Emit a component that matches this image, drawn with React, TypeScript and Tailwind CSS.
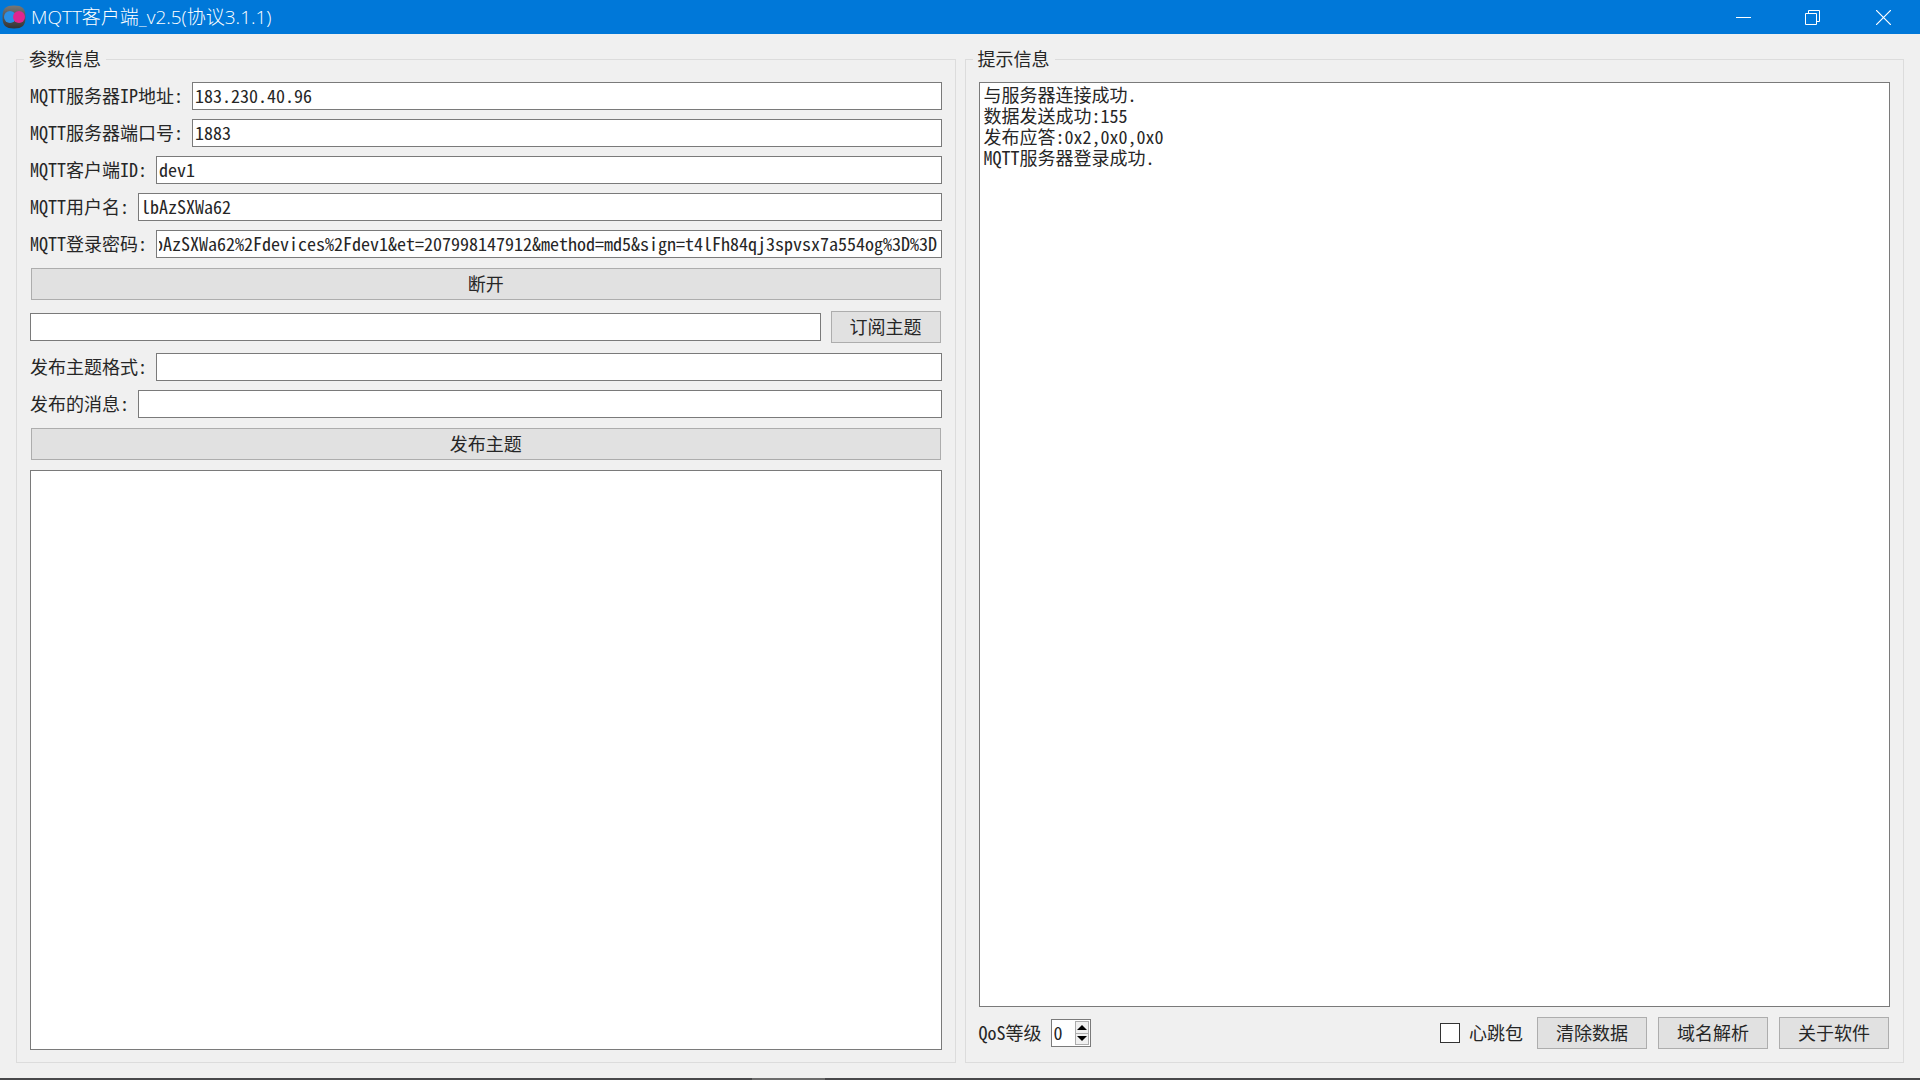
import React, { useEffect, useRef, useState } from "react";

const songFont = "font-['Noto_Sans_Mono_CJK_SC','Noto_Sans_CJK_SC',monospace]";

const password =
  "bAzSXWa62%2Fdevices%2Fdev1&et=207998147912&method=md5&sign=t4lFh84qj3spvsx7a554og%3D%3D";

const logText = `与服务器连接成功.
数据发送成功:155
发布应答:0x2,0x0,0x0
MQTT服务器登录成功.`;

const inputClass =
  "h-7 min-w-0 flex-1 border border-[#7a7a7a] bg-white pr-1 pb-0.5 pl-0.5 outline-none";

function Button({ children, wide }: { children: React.ReactNode; wide?: boolean }) {
  return (
    <button
      type="button"
      className={`m-px h-8 border border-[#adadad] bg-[#e1e1e1] pb-0.5 hover:bg-[#e5f1fb] ${
        wide ? "" : "w-[110px] shrink-0"
      }`}
    >
      {children}
    </button>
  );
}

function Field({ id, label, value = "" }: { id: string; label: string; value?: string }) {
  const ref = useRef<HTMLInputElement>(null);

  // keep the end of long values in view
  useEffect(() => {
    if (ref.current) ref.current.scrollLeft = ref.current.scrollWidth;
  }, []);

  return (
    <div className="flex items-center gap-[9px]">
      <label htmlFor={id} className="pb-0.5 leading-6 whitespace-nowrap">
        {label}
      </label>
      <input ref={ref} id={id} type="text" defaultValue={value} className={inputClass} />
    </div>
  );
}

function Group({ title, children }: { title: string; children: React.ReactNode }) {
  return (
    <fieldset className="flex min-w-0 flex-1 flex-col gap-[9px] border border-[#dcdcdc] px-[13px] pt-[13px] pb-3">
      <legend className="-ml-1.5 px-[5px] pb-0.5 leading-[17px]">{title}</legend>
      {children}
    </fieldset>
  );
}

function Logo() {
  return (
    <svg width="24" height="24" viewBox="0 0 24 24" aria-hidden="true">
      <defs>
        <linearGradient id="logoBg" x1="0" y1="0" x2="0" y2="1">
          <stop offset="0" stopColor="#777" />
          <stop offset="1" stopColor="#333" />
        </linearGradient>
      </defs>
      <path
        d="M12 .5C20.500 .5 23.500 3.500 23.500 12S20.500 23.500 12 23.500 .5 20.500 .5 12 3.500 .5 12 .5Z"
        fill="url(#logoBg)"
      />
      <circle cx="8" cy="12" r="6" fill="#2a8fe6" />
      <circle cx="17" cy="12" r="6" fill="#e0258f" />
    </svg>
  );
}

function TitleBar() {
  return (
    <header className="flex h-[34px] items-center bg-[#0078d9] pl-0.5 text-white">
      <Logo />
      <h1 className="ml-[5px] flex-1 pt-0.5 font-['Open_Sans','Noto_Sans_CJK_SC',sans-serif] text-[19px] font-light">
        MQTT客户端_v2.5(协议3.1.1)
      </h1>
      <button type="button" aria-label="最小化" className="flex h-full w-[69px] items-center justify-center">
        <svg width="15" height="15" viewBox="0 0 15 15" stroke="currentColor">
          <path d="M0 7.500H15" />
        </svg>
      </button>
      <button type="button" aria-label="还原" className="flex h-full w-[69px] items-center justify-center">
        <svg width="15" height="15" viewBox="0 0 15 15" fill="none" stroke="currentColor">
          <path d="M.5 3.500H11.500V14.500H.5ZM3.500 3.500V.5H14.500V11.500H11.500" />
        </svg>
      </button>
      <button type="button" aria-label="关闭" className="flex h-full w-[73px] items-center justify-center">
        <svg width="15" height="15" viewBox="0 0 15 15" stroke="currentColor" strokeWidth="1.2">
          <path d="M0 0L15 15M15 0L0 15" />
        </svg>
      </button>
    </header>
  );
}

function QosSpin() {
  const [qos, setQos] = useState(0);

  return (
    <div className="flex items-center gap-[9px]">
      <label htmlFor="qos" className="pb-0.5 leading-6">
        QoS等级
      </label>
      <div className="flex h-7 w-10 border border-[#7a7a7a] bg-white p-px">
        <input
          id="qos"
          type="text"
          value={qos}
          onChange={(e) => setQos(Number(e.target.value) || 0)}
          className="min-w-0 flex-1 pb-0.5 pl-px outline-none"
        />
        <div className="flex w-3.5 shrink-0 flex-col border border-[#adadad] bg-[#f0f0f0]">
          <button
            type="button"
            aria-label="增加"
            onClick={() => setQos(Math.min(2, qos + 1))}
            className="flex flex-1 items-center justify-center border-b border-[#adadad]"
          >
            <svg width="10" height="5" viewBox="0 0 10 5">
              <path d="M5 0L10 5H0Z" fill="#000" />
            </svg>
          </button>
          <button
            type="button"
            aria-label="减少"
            onClick={() => setQos(Math.max(0, qos - 1))}
            className="flex flex-1 items-center justify-center"
          >
            <svg width="10" height="5" viewBox="0 0 10 5">
              <path d="M0 0H10L5 5Z" fill="#000" />
            </svg>
          </button>
        </div>
      </div>
    </div>
  );
}

export default function App() {
  return (
    <div className={`flex min-h-screen flex-col bg-[#f0f0f0] text-lg font-light text-neutral-800 ${songFont}`}>
      <TitleBar />

      <main className="flex flex-1 gap-[9px] px-4 pt-4 pb-[15px]">
        {/* 左侧:连接参数 */}
        <Group title="参数信息">
          <Field id="ip" label="MQTT服务器IP地址:" value="183.230.40.96" />
          <Field id="port" label="MQTT服务器端口号:" value="1883" />
          <Field id="client" label="MQTT客户端ID:" value="dev1" />
          <Field id="user" label="MQTT用户名:" value="lbAzSXWa62" />
          <Field id="password" label="MQTT登录密码:" value={password} />
          <Button wide>断开</Button>
          <div className="flex items-center gap-[9px]">
            <input type="text" aria-label="订阅主题" className={inputClass} />
            <Button>订阅主题</Button>
          </div>
          <Field id="topic" label="发布主题格式:" />
          <Field id="message" label="发布的消息:" />
          <Button wide>发布主题</Button>
          <textarea
            aria-label="接收的消息"
            className="flex-1 resize-none border border-[#7a7a7a] bg-white p-1 leading-[21px] outline-none"
          />
        </Group>

        {/* 右侧:日志 */}
        <Group title="提示信息">
          <textarea
            aria-label="提示信息"
            readOnly
            value={logText}
            className="flex-1 resize-none border border-[#7a7a7a] bg-white px-1 py-px leading-[21px] outline-none"
          />
          <div className="flex items-center">
            <QosSpin />
            <div className="flex-1" />
            <div className="mr-[13px] flex items-center gap-[9px]">
              <input
                id="heartbeat"
                type="checkbox"
                className="size-5 appearance-none border border-[#333] bg-white checked:bg-[#0078d9]"
              />
              <label htmlFor="heartbeat" className="pb-0.5 leading-6">
                心跳包
              </label>
            </div>
            <div className="flex gap-[9px]">
              <Button>清除数据</Button>
              <Button>域名解析</Button>
              <Button>关于软件</Button>
            </div>
          </div>
        </Group>
      </main>

      <footer className="flex h-0.5 bg-[#48484a]">
        <div className="ml-[752px] w-[73px] bg-[#6b6b6b]" />
      </footer>
    </div>
  );
}
